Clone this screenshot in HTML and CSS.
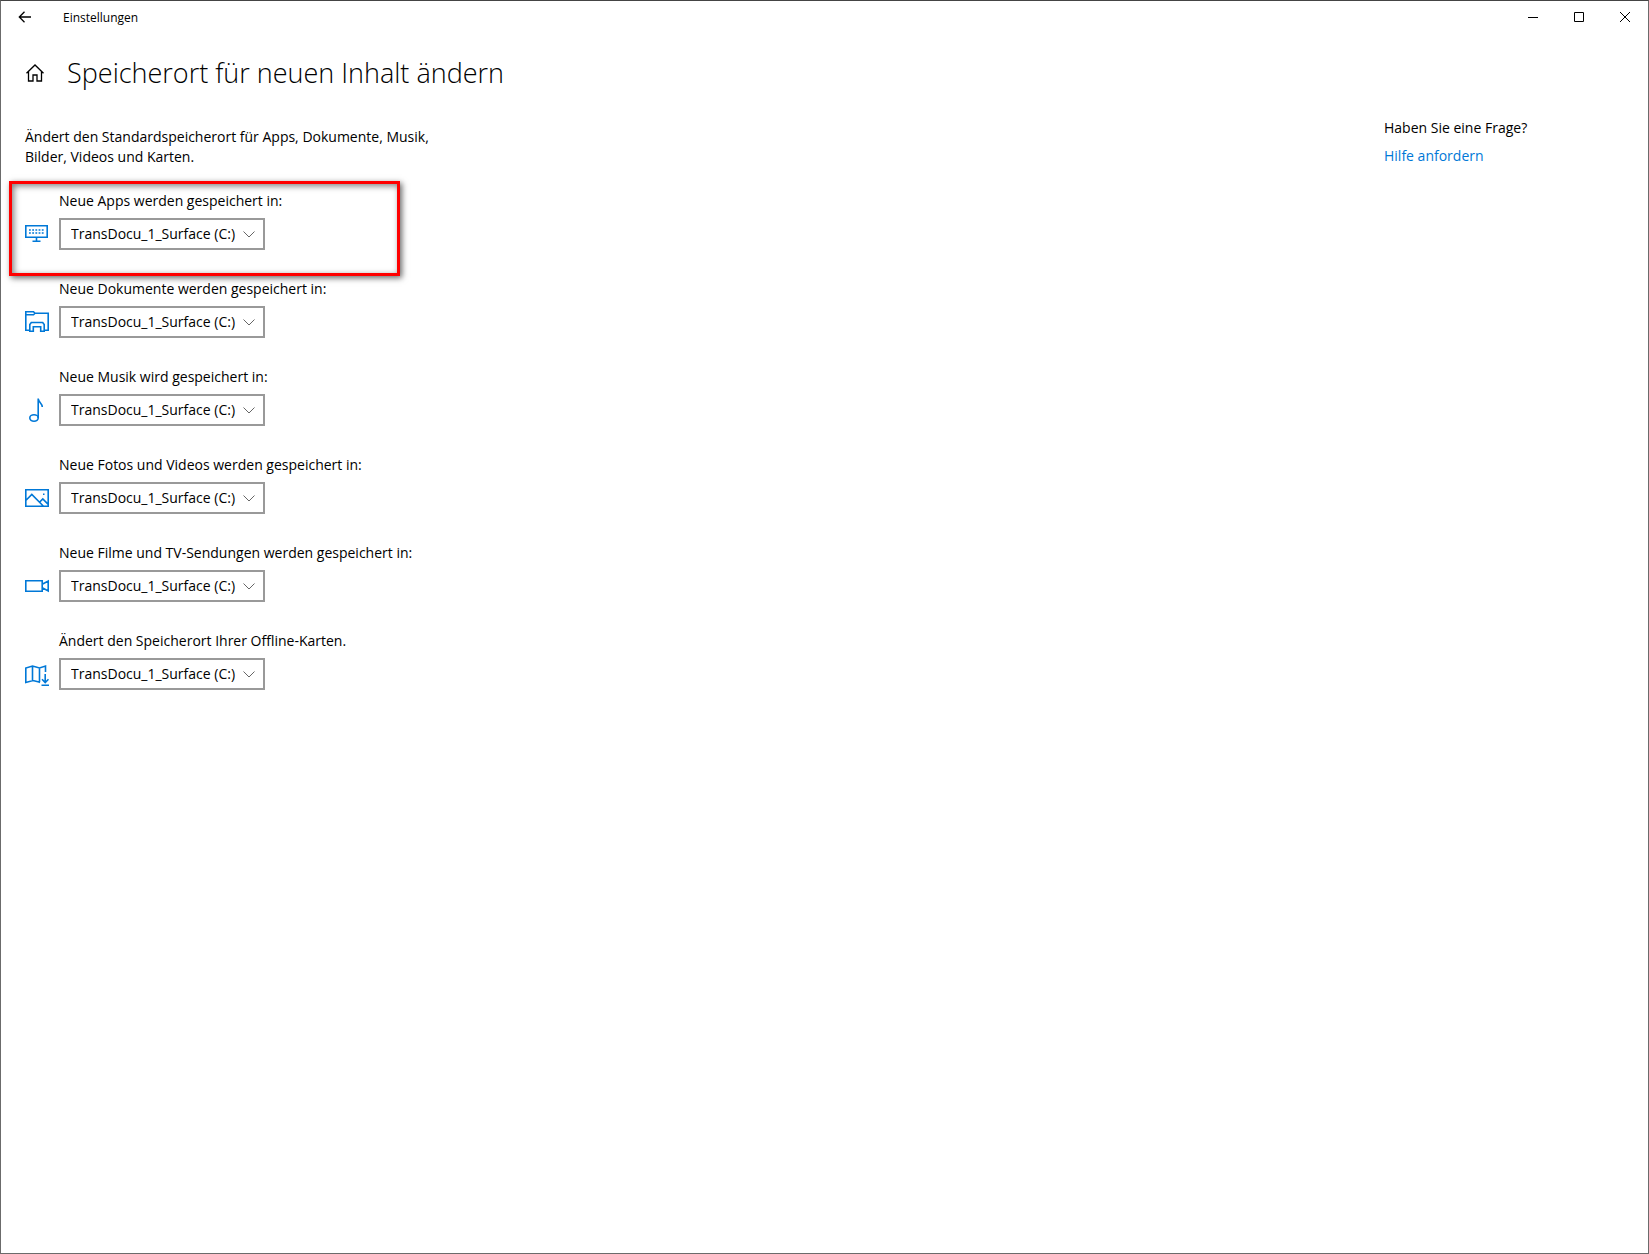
FILE: index.html
```html
<!DOCTYPE html>
<html lang="de">
<head>
  <meta charset="UTF-8">
  <meta name="viewport" content="width=device-width, initial-scale=1.0">
  <title>Einstellungen</title>
  <link rel="stylesheet" href="styles.css">
</head>
<body>
  <div class="window">
    <header class="titlebar">
      <button type="button" class="back-btn" aria-label="Zurück">
        <svg width="14" height="12" viewBox="0 0 14 12"><path d="M1.5 6H13M6.500 .8L1.300 6l5.200 5.200"/></svg>
      </button>
      <span class="app-name">Einstellungen</span>
      <div class="window-controls">
        <button type="button" aria-label="Minimieren">
          <svg width="10" height="10" viewBox="0 0 10 10"><path d="M0 5.500h10"/></svg>
        </button>
        <button type="button" aria-label="Maximieren">
          <svg width="10" height="10" viewBox="0 0 10 10"><path d="M.5 .5h9v9h-9z"/></svg>
        </button>
        <button type="button" aria-label="Schließen">
          <svg width="10" height="10" viewBox="0 0 10 10"><path d="M0 0l10 10M10 0L0 10"/></svg>
        </button>
      </div>
    </header>

    <div class="page-header">
      <button type="button" class="home-btn" aria-label="Startseite">
        <svg width="20" height="18" viewBox="0 0 20 18"><path d="M1.500 9.300L10 1l8.500 8.300M3.500 7.500v9.500h4.500v-6h4v6h4.500V7.500"/></svg>
      </button>
      <h1>Speicherort für neuen Inhalt ändern</h1>
    </div>

    <div class="content">
      <main>
        <p class="intro">Ändert den Standardspeicherort für Apps, Dokumente, Musik, Bilder, Videos und Karten.</p>

        <form class="locations">
          <div class="location highlight">
            <label for="apps">Neue Apps werden gespeichert in:</label>
            <svg class="icon" viewBox="0 0 24 24">
              <path d="M.8 3.800h21.400v11.400H.8zM11.500 15.200v4M7.500 19.200h8"/>
              <path class="dots" d="M4 8h15M4 11h15"/>
            </svg>
            <div class="dropdown">
              <select id="apps"><option>TransDocu_1_Surface (C:)</option></select>
              <svg class="chevron" viewBox="0 0 12 7"><path d="M.5 .5L6 6 11.500 .5"/></svg>
            </div>
          </div>

          <div class="location">
            <label for="dokumente">Neue Dokumente werden gespeichert in:</label>
            <svg class="icon" viewBox="0 0 24 24">
              <path d="M5 20.200H.8V1.800h7.700l1.500 1.500h13.200v16.900H19M.8 4.800h7.700l1.500-1.500"/>
              <path d="M4.800 21.200v-6.700l1.500-2h11.400l1.500 2v6.700h-3.500v-4.500H8.300v4.500z"/>
            </svg>
            <div class="dropdown">
              <select id="dokumente"><option>TransDocu_1_Surface (C:)</option></select>
              <svg class="chevron" viewBox="0 0 12 7"><path d="M.5 .5L6 6 11.500 .5"/></svg>
            </div>
          </div>

          <div class="location">
            <label for="musik">Neue Musik wird gespeichert in:</label>
            <svg class="icon" viewBox="0 0 24 24">
              <ellipse cx="9" cy="20" rx="4.200" ry="3.200"/>
              <path d="M13.200 20V.5c.3 4 4.100 4.500 4.100 8.500"/>
            </svg>
            <div class="dropdown">
              <select id="musik"><option>TransDocu_1_Surface (C:)</option></select>
              <svg class="chevron" viewBox="0 0 12 7"><path d="M.5 .5L6 6 11.500 .5"/></svg>
            </div>
          </div>

          <div class="location">
            <label for="fotos">Neue Fotos und Videos werden gespeichert in:</label>
            <svg class="icon" viewBox="0 0 24 24">
              <path d="M.8 3.800h22.400v16.400H.8zM.8 14.500l6-6 11.700 11.700M14.500 16.300l3.300-3.300 5.400 5.400"/>
              <path d="M18 8.300h1.500"/>
            </svg>
            <div class="dropdown">
              <select id="fotos"><option>TransDocu_1_Surface (C:)</option></select>
              <svg class="chevron" viewBox="0 0 12 7"><path d="M.5 .5L6 6 11.500 .5"/></svg>
            </div>
          </div>

          <div class="location">
            <label for="filme">Neue Filme und TV-Sendungen werden gespeichert in:</label>
            <svg class="icon" viewBox="0 0 24 24">
              <path d="M.8 6.800h16.400v10.400H.8zM17.200 10.300l6-3.300v10l-6-3.300"/>
            </svg>
            <div class="dropdown">
              <select id="filme"><option>TransDocu_1_Surface (C:)</option></select>
              <svg class="chevron" viewBox="0 0 12 7"><path d="M.5 .5L6 6 11.500 .5"/></svg>
            </div>
          </div>

          <div class="location">
            <label for="karten">Ändert den Speicherort Ihrer Offline-Karten.</label>
            <svg class="icon" viewBox="0 0 24 24">
              <path d="M15 20.500l-1-.5-6-1.500-7.200 2V6l6.700-2 7 2 6-2v6M7.500 4v14.500M14.500 6v14"/>
              <path d="M20.200 12v8.500M17 17.200l3.200 3.300 3.300-3.300M16.500 23.200H24"/>
            </svg>
            <div class="dropdown">
              <select id="karten"><option>TransDocu_1_Surface (C:)</option></select>
              <svg class="chevron" viewBox="0 0 12 7"><path d="M.5 .5L6 6 11.500 .5"/></svg>
            </div>
          </div>
        </form>
      </main>

      <aside class="help">
        <p>Haben Sie eine Frage?</p>
        <a href="#">Hilfe anfordern</a>
      </aside>
    </div>
  </div>
</body>
</html>
```

FILE: styles.css
```css
*, *::after {
  box-sizing: border-box;
}

body {
  margin: 0;
  font-family: "Open Sans", "Noto Sans", sans-serif;
  font-size: 14px;
  line-height: 20px;
  color: #000;
  background: #fff;
}

h1, p {
  margin: 0;
}

button {
  display: flex;
  align-items: center;
  justify-content: center;
  padding: 0;
  border: none;
  background: none;
}

svg {
  fill: none;
  stroke: #000;
}

.window {
  min-height: 100vh;
  border: 1px solid #6b6b6b;
  border-top-color: #444;
}

/* Title bar */
.titlebar {
  display: flex;
  height: 32px;
}

.back-btn {
  width: 48px;
}

.back-btn svg, .home-btn svg {
  stroke-width: 1.3;
}

.app-name {
  padding-left: 14px;
  font-size: 12px;
  line-height: 34px;
}

.window-controls {
  display: flex;
  margin-left: auto;
}

.window-controls button {
  width: 46px;
}

.page-header {
  display: flex;
  align-items: center;
  gap: 22px;
  padding: 20px 24px 0;
}

h1 {
  font-size: 27px;
  font-weight: 300;
  line-height: 40px;
}

/* Content */
.content {
  display: flex;
  padding-top: 24px;
}

main {
  flex: 1;
  padding: 10px 24px;
}

.intro {
  max-width: 420px;
}

.locations {
  display: flex;
  flex-direction: column;
  gap: 29px;
  padding-top: 24px;
}

.location {
  position: relative;
  display: grid;
  grid-template-columns: 24px 1fr;
  column-gap: 10px;
  row-gap: 7px;
  align-items: center;
}

.location label {
  grid-column: 2;
}

.highlight::after {
  content: "";
  position: absolute;
  top: -10px;
  left: -16px;
  width: 391px;
  height: 95px;
  border: 3px solid #f00;
  box-shadow: 2px 2px 6px rgba(0, 0, 0, 0.6), inset 2px 2px 6px rgba(0, 0, 0, 0.5);
  pointer-events: none;
}

.icon {
  width: 24px;
  height: 24px;
  stroke: #0078d7;
  stroke-width: 1.6;
}

.icon .dots {
  stroke-width: 1.6;
  stroke-dasharray: 1.8 1.4;
}

.dropdown {
  position: relative;
  width: 206px;
}

.dropdown select {
  display: block;
  width: 100%;
  height: 32px;
  padding: 0 16px 0 10px;
  border: 2px solid #999;
  border-radius: 0;
  font: inherit;
  color: #000;
  background: #fff;
  appearance: none;
}

.chevron {
  position: absolute;
  top: 13px;
  right: 10px;
  width: 12px;
  height: 7px;
  stroke: #666;
  pointer-events: none;
}

/* Help column */
.help {
  width: 264px;
  padding-top: 1px;
}

.help a {
  display: inline-block;
  margin-top: 8px;
  color: #0078d7;
  text-decoration: none;
}
```
